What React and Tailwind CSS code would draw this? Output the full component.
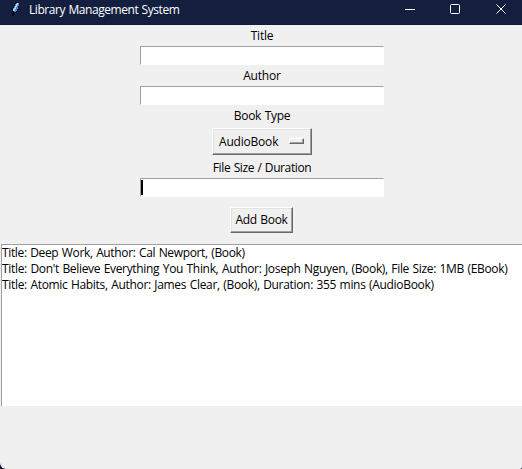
const labelText = "whitespace-nowrap text-[12px] leading-[20px]";

function Label({ children, tracking }) {
  return <div className={`h-5 ${labelText} ${tracking}`}>{children}</div>;
}

function Entry({ focused }) {
  return (
    <div className="flex h-[19px] w-[244px] border border-b-white border-l-[#a0a0a0] border-r-white border-t-[#a0a0a0] bg-white pt-px">
      {focused && <div className="h-[15px] w-[2px] bg-black" />}
    </div>
  );
}

function Feather() {
  return (
    <svg className="h-4 w-4" viewBox="0 0 16 16" shapeRendering="crispEdges">
      <path d="M8 0h3v5h-1v3h-1v2h-1v1H6v3H4v-3h1v-1H4V6h1V4h1V2h1V1h1z" fill="#05070d" />
      <path d="M8 1h3v3h-1v3H9v2H8v1H6V8H5V6h1V4h1V2h1z" fill="#3f86d8" />
      <path d="M9 1h1v2H9zM8 2h1v3H8zM7 4h1v3H7zM6 6h1v3H6zM5 7h1v2H5z" fill="#b5dbf9" />
    </svg>
  );
}

function TitleBar() {
  return (
    <div className="flex h-[25px] border-b border-[#17183f] bg-[#141e3f] text-white">
      <div className="ml-2 mt-[2px]"><Feather /></div>
      <div className={`ml-[5px] flex-1 ${labelText} tracking-[-0.44px]`}>Library Management System</div>
      <svg className="h-[24px] w-[132px]" viewBox="0 0 132 24" fill="none" stroke="white">
        <path d="M15 9.5h10" />
        <rect x="60.5" y="4.5" width="9" height="9" rx="1" />
        <path d="M106.5 4.5l9 9M115.5 4.5l-9 9" />
      </svg>
    </div>
  );
}

const books = [
  { text: "Title: Deep Work, Author: Cal Newport, (Book)", tracking: "tracking-[-0.35px]" },
  { text: "Title: Don't Believe Everything You Think, Author: Joseph Nguyen, (Book), File Size: 1MB (EBook)", tracking: "tracking-[-0.325px]" },
  { text: "Title: Atomic Habits, Author: James Clear, (Book), Duration: 355 mins (AudioBook)", tracking: "tracking-[-0.32px]" },
];

export default function App() {
  return (
    <div className="bg-[#0c0c25]">
      <div className="h-[469px] w-[522px] overflow-hidden rounded-bl-[6px] rounded-br-[2px] bg-[#f0f0f0] font-['Open_Sans','Noto_Sans',sans-serif] text-black [word-spacing:0.7px]">
        <TitleBar />
        <div className="flex w-[524px] flex-col items-center pt-px">
          <Label tracking="tracking-[-0.2px]">Title</Label>
          <Entry />
          <div className="h-px" />
          <Label tracking="tracking-[-0.2px]">Author</Label>
          <Entry />
          <div className="h-px" />
          <Label tracking="tracking-[-0.3px]">Book Type</Label>
          <div className="mb-[3px] mt-[2px] flex h-[27px] w-[100px] items-center border border-b-[#696969] border-l-white border-r-[#696969] border-t-white shadow-[inset_-1px_-1px_0_#a0a0a0,inset_1px_1px_0_#e3e3e3]">
            <div className={`ml-[6px] w-[70px] ${labelText} tracking-[-0.2px]`}>AudioBook</div>
            <div className="mb-px h-[6px] w-[15px] border border-b-[#696969] border-l-white border-r-[#696969] border-t-white shadow-[inset_-1px_-1px_0_#a0a0a0]" />
          </div>
          <Label tracking="tracking-[-0.4px]">File Size / Duration</Label>
          <Entry focused />
          <div className="mb-[11px] mr-px mt-[10px] flex h-[26px] w-[63px] items-center justify-center border border-b-[#696969] border-l-white border-r-[#696969] border-t-white shadow-[inset_-1px_-1px_0_#a0a0a0,inset_1px_1px_0_#e3e3e3]">
            <div className={`${labelText} tracking-[-0.3px]`}>Add Book</div>
          </div>
        </div>
        <div className="ml-px h-[162px] border-l border-t border-[#a0a0a0] bg-white">
          {books.map((book) => (
            <div key={book.text} className={`h-4 whitespace-nowrap text-[12px] leading-[16px] ${book.tracking}`}>{book.text}</div>
          ))}
        </div>
      </div>
    </div>
  );
}
